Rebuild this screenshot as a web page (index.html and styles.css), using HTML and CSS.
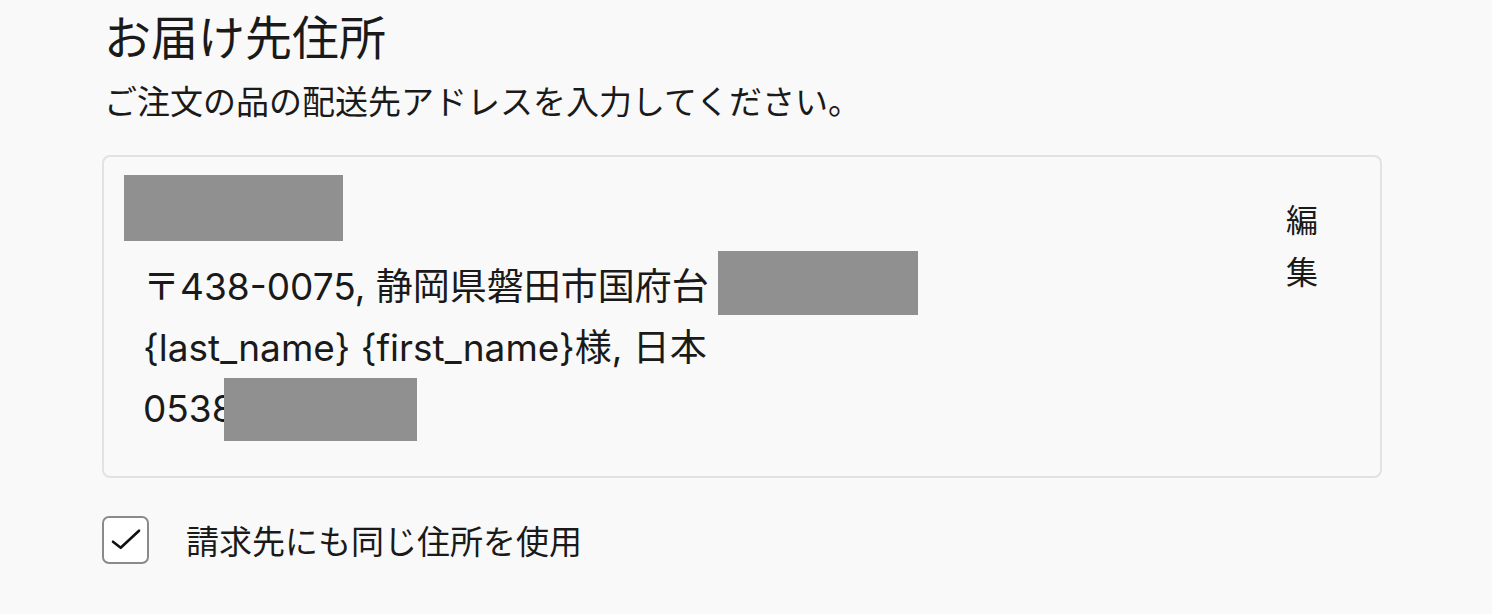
FILE: index.html
```html
<!DOCTYPE html>
<html lang="ja">
<head>
    <meta charset="UTF-8">
    <meta name="viewport" content="width=device-width, initial-scale=1.0">
    <title>お届け先住所</title>
    <link rel="stylesheet" href="styles.css">
</head>
<body>
    <div class="shipping">
        <h1 class="title">お届け先住所</h1>
        <p class="subtitle">ご注文の品の配送先アドレスを入力してください。</p>

        <div class="address-card">
            <div class="address-body">
                <div class="redacted name-block"></div>
                <div class="address-lines">
                    <div class="line">〒438-0075, 静岡県磐田市国府台<span class="redacted street"></span></div>
                    <div class="line">{last_name} {first_name}様, 日本</div>
                    <div class="line">0538<span class="redacted phone"></span></div>
                </div>
            </div>
            <a class="edit-link" href="#">編集</a>
        </div>

        <label class="same-billing">
            <span class="checkbox">
                <svg width="43" height="44" viewBox="0 0 43 44">
                    <polyline points="9,23.7 16.7,29.8 35,12.7" fill="none" stroke="#111" stroke-width="2.6" stroke-linecap="round" stroke-linejoin="round"/>
                </svg>
            </span>
            <span class="label-text">請求先にも同じ住所を使用</span>
        </label>
    </div>
</body>
</html>
```

FILE: styles.css
```css
body {
    margin: 0;
    background-color: #f9f9f9;
    color: #1a1a1a;
    font-family: Inter, "Noto Sans CJK JP", sans-serif;
}

.shipping {
    padding: 10px 110px 0 102px;
}

.title {
    margin: 0 0 14px 2px;
    font-size: 47px;
    line-height: 56px;
    font-weight: 400;
}

.subtitle {
    margin: 0 0 31px 2px;
    font-size: 33px;
    line-height: 44px;
}

.address-card {
    display: flex;
    justify-content: space-between;
    align-items: flex-start;
    border: 2px solid #e2e2e2;
    border-radius: 8px;
    padding: 18px 60px 37px 20px;
}

.redacted {
    display: inline-block;
    background-color: #909090;
    vertical-align: top;
}

.name-block {
    display: block;
    width: 219px;
    height: 66px;
}

.address-lines {
    margin-top: 15px;
    padding-left: 19px;
    font-size: 37px;
    line-height: 61px;
}

.line {
    height: 61px;
    white-space: nowrap;
}

/* negative margins keep the grey boxes from stretching the line */
.street {
    width: 200px;
    height: 64px;
    margin: -5px 0 0 9px;
}

.phone {
    width: 193px;
    height: 63px;
    margin: 0 0 -2px -11px;
}

.edit-link {
    width: 34px;
    margin-top: 20px;
    font-size: 32px;
    line-height: 52px;
    color: #1a1a1a;
    text-decoration: none;
    word-break: break-all;
}

.same-billing {
    display: flex;
    align-items: center;
    gap: 37px;
    margin-top: 38px;
    cursor: pointer;
}

.checkbox {
    display: block;
    width: 43px;
    height: 44px;
    border: 2px solid #8a8a8a;
    border-radius: 7px;
    background-color: #fff;
}

.checkbox svg {
    display: block;
}

.label-text {
    font-size: 33px;
}
```
